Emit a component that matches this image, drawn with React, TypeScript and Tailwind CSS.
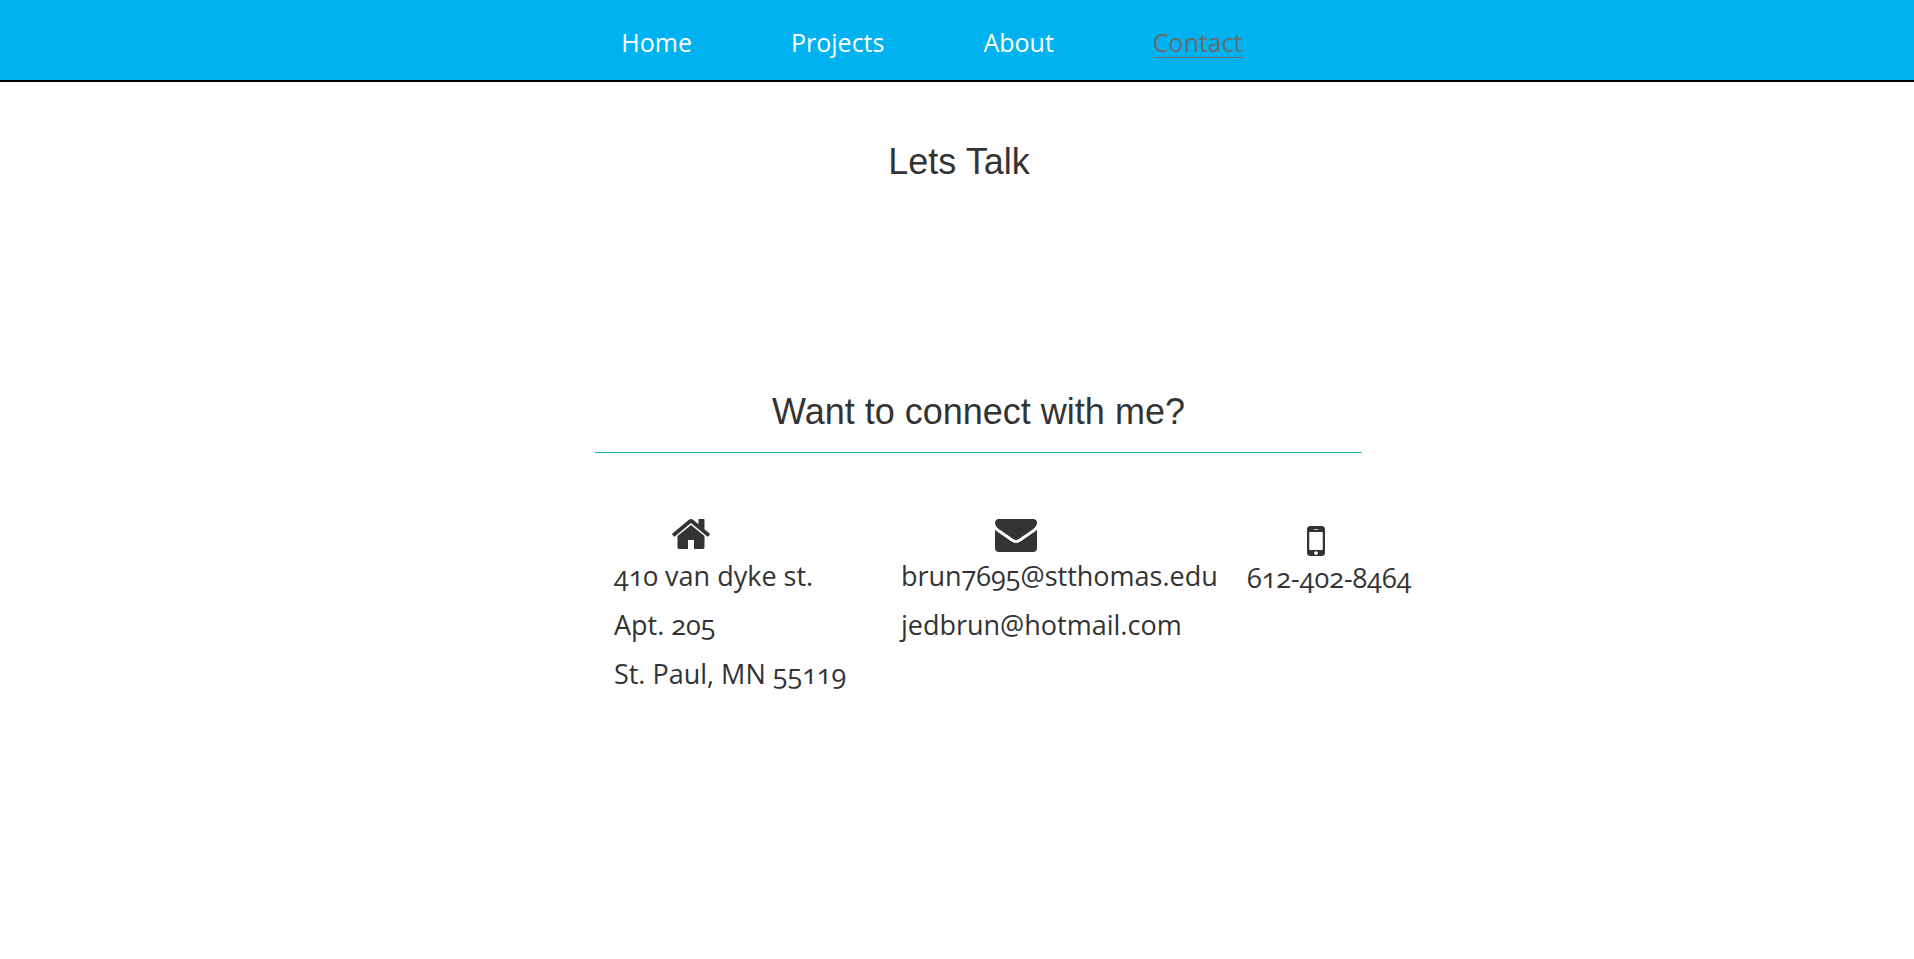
import type { ReactNode } from 'react';

const links = ['Home', 'Projects', 'About', 'Contact'];

function Icon({ d, label }: { d: string; label: string }) {
  return (
    <svg role="img" aria-label={label} viewBox="0 0 1792 1792" className="block size-[42px] fill-current">
      <path d={d} />
    </svg>
  );
}

const homePath =
  'M1472 992v480q0 26-19 45t-45 19h-384v-384h-256v384h-384q-26 0-45-19t-19-45v-480q0-1 .5-3t.5-3l575-474 575 474q1 2 1 6zm223-69l-62 74q-8 9-21 11h-3q-13 0-21-7l-692-577-692 577q-12 8-24 7-13-2-21-11l-62-74q-8-10-7-23.5t11-21.5l719-599q32-26 76-26t76 26l244 204v-195q0-14 9-23t23-9h192q14 0 23 9t9 23v408l219 182q10 8 11 21.5t-7 23.5z';
const mailPath =
  'M1792 710v794q0 66-47 113t-113 47h-1472q-66 0-113-47t-47-113v-794q44 49 101 87 362 246 497 345 57 42 92.5 65.5t94.5 48 110 24.5h2q51 0 110-24.5t94.5-48 92.5-65.5q170-123 498-345 57-39 100-87zm0-294q0 79-49 151t-122 123q-376 261-468 325-10 7-42.5 31t-54 38.5-52 32.5-57.5 27-50 9h-2q-23 0-50-9t-57.5-27-52-32.5-54-38.5-42.5-31q-91-64-262-182.5t-205-142.5q-62-42-117-115.5t-55-136.5q0-78 41.5-130t118.5-52h1472q65 0 112.5 47t47.5 113z';
const phonePath =
  'M976 1408q0-33-23.5-56.5t-56.5-23.5-56.5 23.5-23.5 56.5 23.5 56.5 56.5 23.5 56.5-23.5 23.5-56.5zm208-160v-704q0-13-9.5-22.5t-22.5-9.5h-512q-13 0-22.5 9.5t-9.5 22.5v704q0 13 9.5 22.5t22.5 9.5h512q13 0 22.5-9.5t9.5-22.5zm-192-848q0-16-16-16h-160q-16 0-16 16t16 16h160q16 0 16-16zm288-16v1024q0 52-38 90t-90 38h-512q-52 0-90-38t-38-90v-1024q0-52 38-90t90-38h512q52 0 90 38t38 90z';

function Column({ className, children }: { className: string; children: ReactNode }) {
  return <div className={`shrink-0 whitespace-nowrap ${className}`}>{children}</div>;
}

export default function App() {
  return (
    <div className="min-h-screen bg-white font-['Open_Sans',sans-serif] text-[#333]">
      <header className="border-b-2 border-black bg-[#00b2f0]">
        <nav aria-label="Main" className="flex h-20 justify-center gap-[99px] pt-[26px] pr-[50px] text-[25px] leading-8 text-white">
          {links.map((name) => (
            <a
              key={name}
              href={`#${name.toLowerCase()}`}
              className={name === 'Contact' ? 'h-8 border-b border-[#6b6b6b] text-[#6b6b6b]' : 'h-8'}
            >
              {name}
            </a>
          ))}
        </nav>
      </header>
      <main>
        <h1 className="pt-[60px] pl-1 text-center font-['Liberation_Sans',Arial,sans-serif] text-4xl leading-10">Lets Talk</h1>
        <section className="pt-[210px] pl-[43px]">
          <div className="mx-auto w-[41%]">
            <h2 className="border-b border-[#1ab5ad] pb-5 text-center font-['Liberation_Sans',Arial,sans-serif] text-4xl leading-10">
              Want to connect with me?
            </h2>
            <div className="flex pt-[60px] pl-[19px] text-[27px] leading-[49px]">
              <Column className="w-[287px]">
                <div className="h-[38px] pl-14">
                  <Icon d={homePath} label="Home" />
                </div>
                <address className="not-italic [font-variant-numeric:oldstyle-nums]">
                  410 van dyke st.
                  <br />
                  Apt. 205
                  <br />
                  St. Paul, MN 55119
                </address>
              </Column>
              <Column className="w-[346px]">
                <div className="h-[38px] pl-[94px]">
                  <Icon d={mailPath} label="Email" />
                </div>
                <p className="[font-variant-numeric:oldstyle-nums]">brun7695@stthomas.edu</p>
                <p>jedbrun@hotmail.com</p>
              </Column>
              <Column className="pt-[7px]">
                <div className="h-[38px] pl-12">
                  <Icon d={phonePath} label="Phone" />
                </div>
                <p className="leading-10 [font-variant-numeric:oldstyle-nums]">612-402-8464</p>
              </Column>
            </div>
          </div>
        </section>
      </main>
    </div>
  );
}
